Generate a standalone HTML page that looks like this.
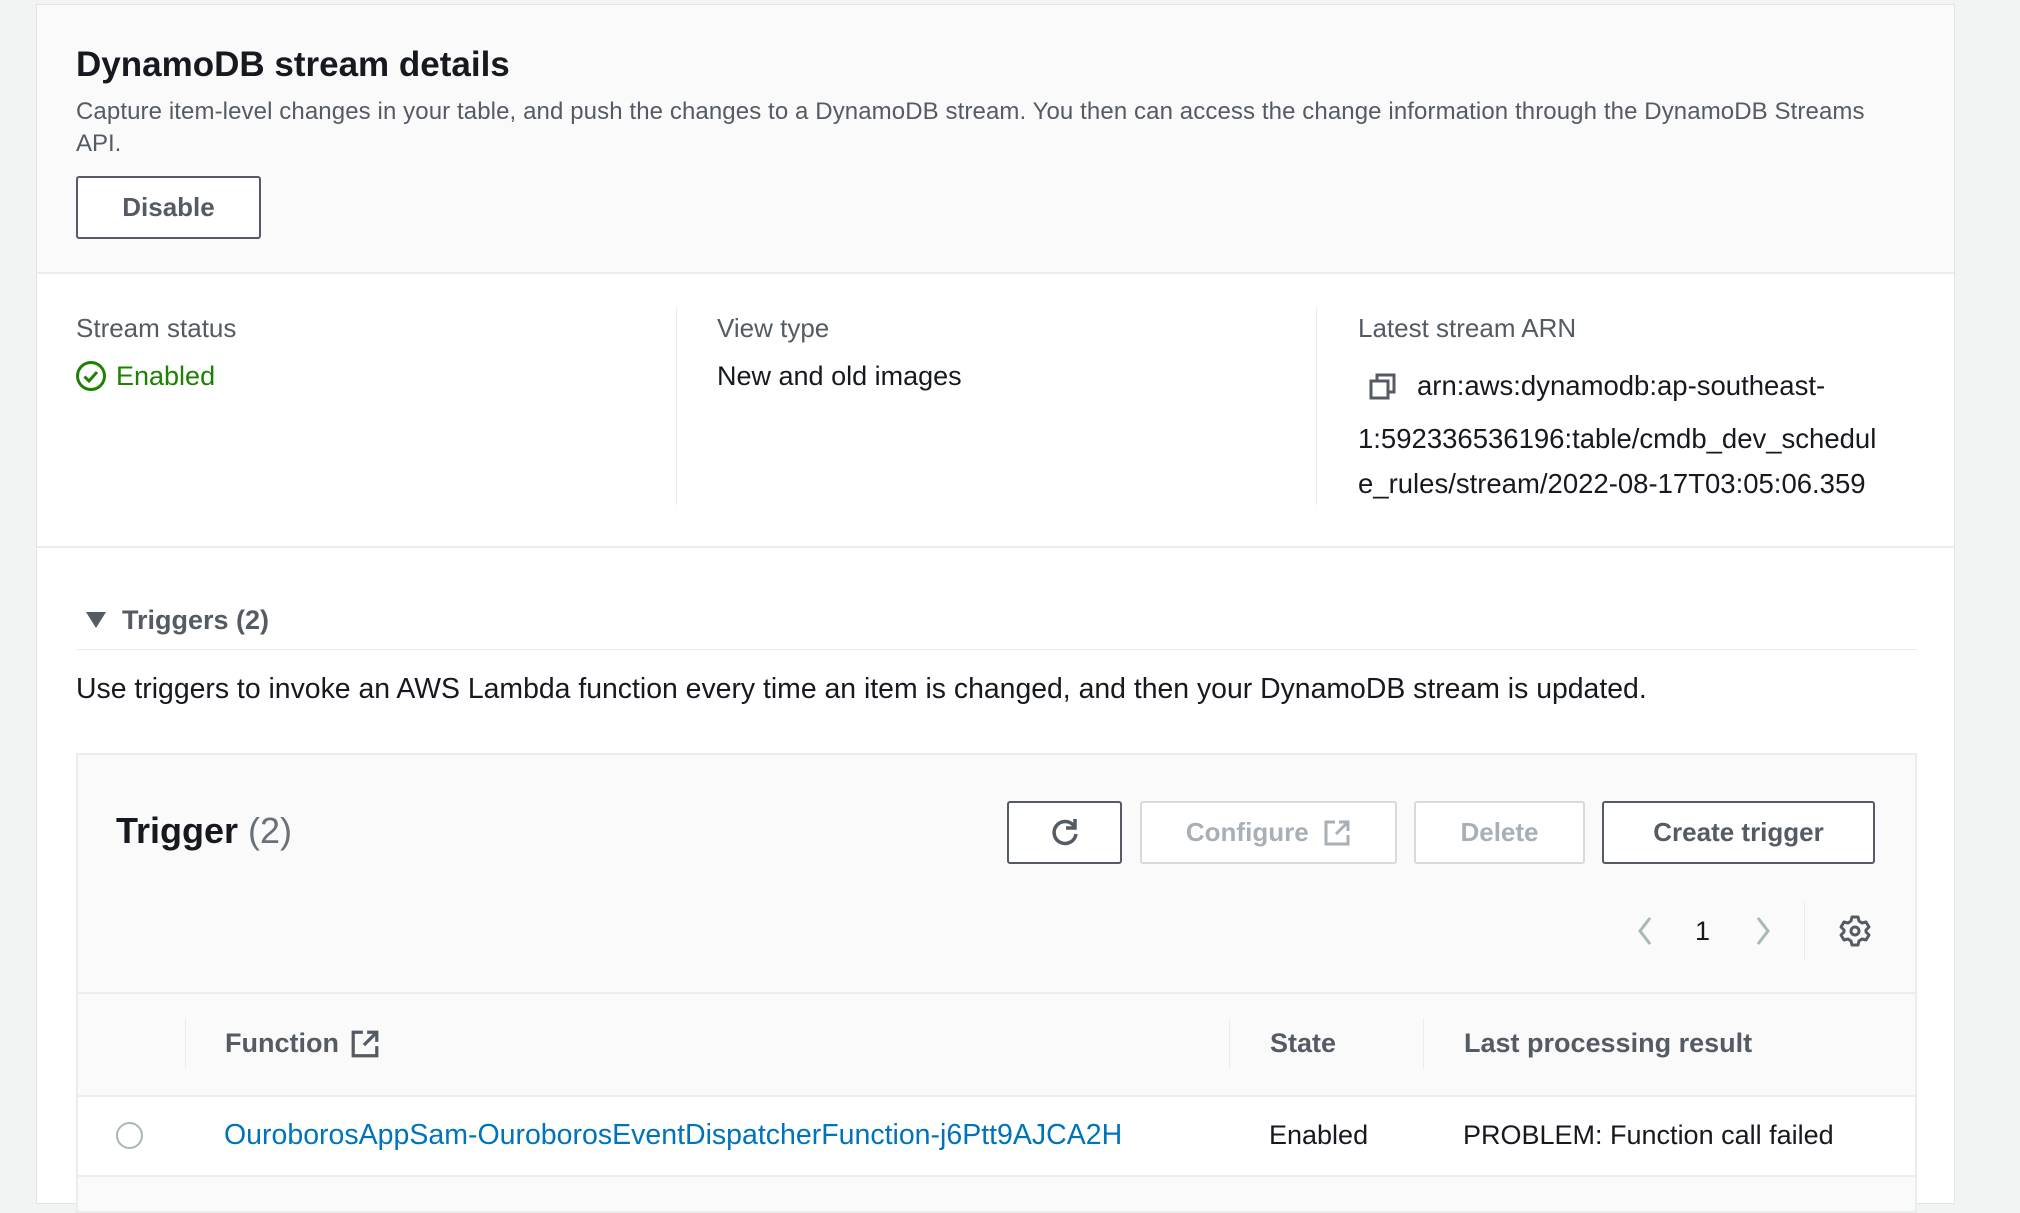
<!DOCTYPE html>
<html><head><meta charset="utf-8"><style>
*{box-sizing:border-box;margin:0;padding:0}
body{width:2020px;height:1186px;overflow:hidden;background:#f2f3f3;font-family:"Liberation Sans",sans-serif;position:relative;color:#16191f}
.abs{position:absolute;white-space:nowrap}
.card{position:absolute;left:36px;top:4px;width:1919px;height:1200px;background:#fff;border:1px solid #e2e4e4}
.head{position:absolute;left:0;top:0;width:100%;height:269px;background:#fafafa;border-bottom:2px solid #eaeded}
.btn{position:absolute;border:2px solid #545b64;border-radius:3px;background:#fff;font-weight:bold;color:#545b64;font-size:26px;display:flex;align-items:center;justify-content:center}
.dis{border-color:#d5dbdb;color:#a8b0b6}
.vl{position:absolute;width:1px;background:#eaeded}
.hl{position:absolute;height:2px;background:#eaeded}
</style></head><body>
<div class="card">
 <div class="head"></div>
</div>
<div class="abs" style="left:76px;top:45px;font-size:35px;font-weight:bold">DynamoDB stream details</div>
<div class="abs" style="left:76px;top:98px;font-size:24px;color:#545b64;letter-spacing:0.1px">Capture item-level changes in your table, and push the changes to a DynamoDB stream. You then can access the change information through the DynamoDB Streams</div>
<div class="abs" style="left:76px;top:130px;font-size:24px;color:#545b64">API.</div>
<div class="btn" style="left:76px;top:176px;width:185px;height:63px">Disable</div>

<div class="abs" style="left:76px;top:313px;font-size:26px;color:#545b64">Stream status</div>
<svg class="abs" style="left:75px;top:360px" width="32" height="32" viewBox="0 0 32 32"><circle cx="16" cy="16" r="13.5" fill="none" stroke="#1d8102" stroke-width="3"/><path d="M9.5 16.5l4.5 4.5 8-9" fill="none" stroke="#1d8102" stroke-width="3"/></svg>
<div class="abs" style="left:116px;top:361px;font-size:27px;color:#1d8102">Enabled</div>
<div class="vl" style="left:676px;top:307px;height:198px"></div>
<div class="abs" style="left:717px;top:313px;font-size:26px;color:#545b64">View type</div>
<div class="abs" style="left:717px;top:361px;font-size:27px">New and old images</div>
<div class="vl" style="left:1316px;top:307px;height:198px"></div>
<div class="abs" style="left:1358px;top:313px;font-size:26px;color:#545b64">Latest stream ARN</div>
<svg class="abs" style="left:1368px;top:372px" width="30" height="30" viewBox="0 0 30 30"><rect x="9" y="3" width="17" height="17" fill="none" stroke="#545b64" stroke-width="3"/><rect x="3" y="9" width="17" height="17" fill="#fff" stroke="#545b64" stroke-width="3"/></svg>
<div class="abs" style="left:1417px;top:370px;font-size:27.5px">arn:aws:dynamodb:ap-southeast-</div>
<div class="abs" style="left:1358px;top:423px;font-size:27.5px">1:592336536196:table/cmdb_dev_schedul</div>
<div class="abs" style="left:1358px;top:468px;font-size:27.5px">e_rules/stream/2022-08-17T03:05:06.359</div>
<div class="hl" style="left:37px;top:546px;width:1917px"></div>

<svg class="abs" style="left:84px;top:610px" width="24" height="20" viewBox="0 0 24 20"><path d="M2 2h20L12 18z" fill="#545b64"/></svg>
<div class="abs" style="left:122px;top:605px;font-size:27px;font-weight:bold;color:#545b64">Triggers (2)</div>
<div class="hl" style="left:76px;top:649px;width:1841px;height:1px"></div>
<div class="abs" style="left:76px;top:673px;font-size:28.4px">Use triggers to invoke an AWS Lambda function every time an item is changed, and then your DynamoDB stream is updated.</div>

<div style="position:absolute;left:76px;top:753px;width:1841px;height:460px;border:2px solid #eaeded;background:#fafafa"></div>
<div class="abs" style="left:116px;top:810px;font-size:36px;font-weight:bold">Trigger <span style="font-weight:normal;color:#687078">(2)</span></div>
<div class="btn" style="left:1007px;top:801px;width:115px;height:63px"><svg width="34" height="34" viewBox="0 0 34 34"><path d="M26 10A11 11 0 1 0 28 18" fill="none" stroke="#545b64" stroke-width="3.5"/><path d="M27 3v9h-9" fill="none" stroke="#545b64" stroke-width="3.5"/></svg></div>
<div class="btn dis" style="left:1140px;top:801px;width:257px;height:63px">Configure&nbsp;&nbsp;<svg width="28" height="28" viewBox="0 0 28 28"><path d="M12 3H3v22h22v-9M16 3h9v9M25 3L13 15" fill="none" stroke="#a8b0b6" stroke-width="3"/></svg></div>
<div class="btn dis" style="left:1414px;top:801px;width:171px;height:63px">Delete</div>
<div class="btn" style="left:1602px;top:801px;width:273px;height:63px">Create trigger</div>

<svg class="abs" style="left:1635px;top:915px" width="20" height="32" viewBox="0 0 20 32"><path d="M15 3L5 16l10 13" fill="none" stroke="#aab7b8" stroke-width="3"/></svg>
<div class="abs" style="left:1695px;top:916px;font-size:27px">1</div>
<svg class="abs" style="left:1753px;top:915px" width="20" height="32" viewBox="0 0 20 32"><path d="M5 3l10 13L5 29" fill="none" stroke="#aab7b8" stroke-width="3"/></svg>
<div class="vl" style="left:1804px;top:902px;height:59px"></div>
<svg class="abs" style="left:1838px;top:914px" width="34" height="34" viewBox="0 0 34 34"><path d="M14 3h6l1 4 3 2 4-1 3 5-3 3v2l3 3-3 5-4-1-3 2-1 4h-6l-1-4-3-2-4 1-3-5 3-3v-2l-3-3 3-5 4 1 3-2z" fill="none" stroke="#545b64" stroke-width="3" stroke-linejoin="round"/><circle cx="17" cy="17" r="4" fill="none" stroke="#545b64" stroke-width="3"/></svg>

<div class="hl" style="left:77px;top:992px;width:1839px"></div>
<div class="vl" style="left:185px;top:1018px;height:51px"></div>
<div class="vl" style="left:1229px;top:1018px;height:51px"></div>
<div class="vl" style="left:1423px;top:1018px;height:51px"></div>
<div class="abs" style="left:225px;top:1028px;font-size:27px;font-weight:bold;color:#545b64">Function</div>
<svg class="abs" style="left:350px;top:1029px" width="30" height="30" viewBox="0 0 28 28"><path d="M12 3H3v22h22v-9M16 3h9v9M25 3L13 15" fill="none" stroke="#545b64" stroke-width="3"/></svg>
<div class="abs" style="left:1270px;top:1028px;font-size:27px;font-weight:bold;color:#545b64">State</div>
<div class="abs" style="left:1464px;top:1028px;font-size:27px;font-weight:bold;color:#545b64">Last processing result</div>
<div style="position:absolute;left:78px;top:1095px;width:1837px;background:#fff;border-top:2px solid #eaeded;border-bottom:2px solid #eaeded;height:82px"></div>
<div style="position:absolute;left:116px;top:1122px;width:27px;height:27px;border:2px solid #aab7b8;border-radius:50%;background:#fff"></div>
<div class="abs" style="left:224px;top:1119px;font-size:28.5px;color:#0073bb">OuroborosAppSam-OuroborosEventDispatcherFunction-j6Ptt9AJCA2H</div>
<div class="abs" style="left:1269px;top:1120px;font-size:27px">Enabled</div>
<div class="abs" style="left:1463px;top:1120px;font-size:27px">PROBLEM: Function call failed</div>
</body></html>
